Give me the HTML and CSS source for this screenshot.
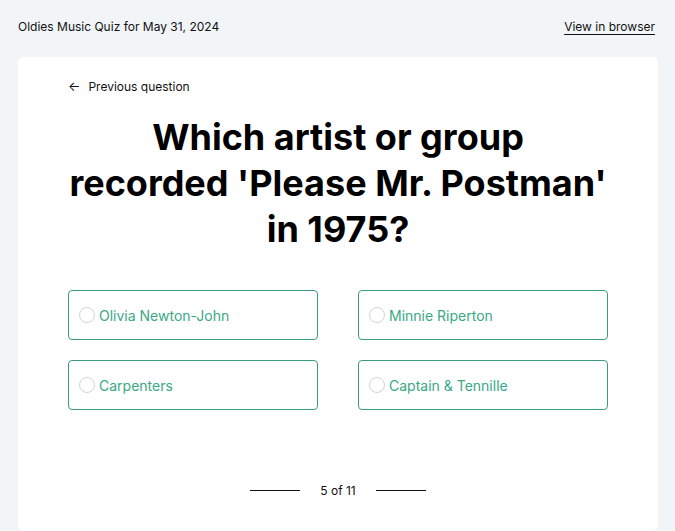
FILE: index.html
```html
<!DOCTYPE html>
<html>
<head>
<meta charset="utf-8">
<link rel="stylesheet" href="styles.css">
</head>
<body>
<div class="top">
  <span>Oldies Music Quiz for May 31, 2024</span>
  <a class="view" href="#">View in browser</a>
</div>
<div class="card">
  <div class="prev"><span class="arrow">&larr;</span> Previous question</div>
  <h1>Which artist or group<br>recorded 'Please Mr. Postman'<br>in 1975?</h1>
  <div class="options">
    <div class="opt"><span class="radio"></span>Olivia Newton-John</div>
    <div class="opt"><span class="radio"></span>Minnie Riperton</div>
    <div class="opt"><span class="radio"></span>Carpenters</div>
    <div class="opt"><span class="radio"></span>Captain &amp; Tennille</div>
  </div>
  <div class="pager"><span class="line"></span><span class="count">5 of 11</span><span class="line"></span></div>
</div>
</body>
</html>
```
FILE: styles.css
```css
html, body { margin: 0; padding: 0; }
body {
  background: #f1f5f8;
  font-family: Inter, "Noto Sans", sans-serif;
  color: #111;
}
.top {
  display: flex;
  justify-content: space-between;
  align-items: center;
  height: 55px;
  padding: 0 20px 2px 18px;
  font-size: 12px;
  box-sizing: border-box;
}
.view { color: #111; text-decoration: underline; text-underline-offset: 3px; }
.card {
  margin: 2px 17px 0 18px;
  background: #fff;
  border-radius: 6px;
  padding: 19px 50px 0;
  height: 474px;
  box-sizing: border-box;
}
.prev { font-size: 12px; display: flex; align-items: center; gap: 8px; height: 20px; }
.arrow { font-size: 13px; }
h1 {
  margin: 18px -20px 0;
  font-size: 36px;
  line-height: 46px;
  font-weight: 700;
  text-align: center;
  white-space: nowrap;
  color: #000;
}
.options {
  margin-top: 38px;
  display: grid;
  grid-template-columns: 250px 250px;
  column-gap: 40px;
  row-gap: 20px;
}
.opt {
  height: 50px;
  box-sizing: border-box;
  border: 1px solid #3a9e7d;
  border-radius: 4px;
  display: flex;
  align-items: center;
  padding-left: 10px;
  color: #3aa886;
  font-size: 14px;
  gap: 4px;
}
.radio {
  width: 16px; height: 16px;
  box-sizing: border-box;
  border: 1px solid #d4d4d4;
  border-radius: 50%;
}
.pager {
  margin-top: 73px;
  display: flex;
  justify-content: center;
  align-items: center;
  gap: 20px;
  font-size: 12px;
}
.line { width: 50px; height: 1px; background: #111; }
```
